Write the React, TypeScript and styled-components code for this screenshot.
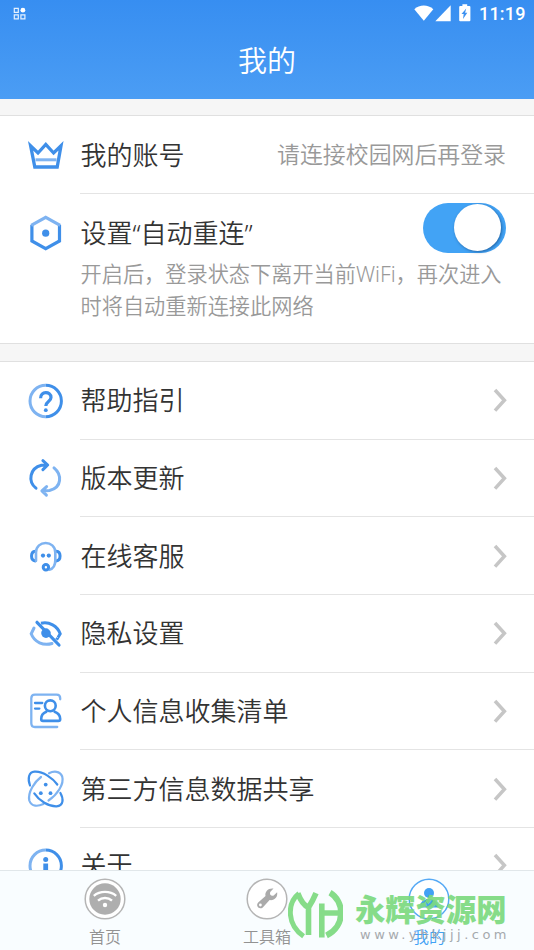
import React from 'react';
import styled, { createGlobalStyle } from 'styled-components';

const BLUE = '#3f8fe9';
const SOFT = '#7eb3f1';

const Global = createGlobalStyle`
  * { box-sizing: border-box; }
  html, body { margin: 0; padding: 0; overflow: hidden; }
  body { font-family: 'Noto Sans CJK SC', 'Noto Sans', sans-serif; font-weight: 350; }
  svg { display: block; flex: none; }
`;

const Screen = styled.div`
  position: relative;
  display: flex;
  flex-direction: column;
  width: 534px;
  height: 950px;
  overflow: hidden;
  background: #f6f6f6;
`;

const Header = styled.header`
  flex: none;
  height: 99px;
  background: linear-gradient(#378ef1, #4b9df4);
  color: #fff;
`;

const StatusBar = styled.div`
  display: flex;
  justify-content: space-between;
  align-items: center;
  height: 27px;
  padding: 0 9px 0 13px;
`;

const StatusGroup = styled.div`
  display: flex;
  align-items: center;
`;

const Clock = styled.span`
  font: 500 18px/27px Roboto, sans-serif;
  margin-left: 8px;
  letter-spacing: 0.2px;
  width: 46px;
  white-space: nowrap;
`;

const Title = styled.h1`
  margin: 0;
  font-size: 29px;
  line-height: 64px;
  font-weight: 350;
  text-align: center;
`;

const Content = styled.main`
  flex: 1;
  min-height: 0;
  overflow: hidden;
  padding-top: 16px;
`;

const Section = styled.section<{ $gap?: number }>`
  background: #fff;
  border-top: 1px solid #e0e0e0;
  border-bottom: 1px solid #e0e0e0;
  margin-bottom: ${(p) => p.$gap ?? 0}px;
`;

const Row = styled.div<{ $height: number }>`
  display: flex;
  height: ${(p) => p.$height}px;
  padding-left: 24px;
`;

const IconSlot = styled.div`
  display: flex;
  align-items: center;
  width: 56px;
  height: 77px;
`;

const RowBody = styled.div<{ $last?: boolean }>`
  flex: 1;
  display: flex;
  justify-content: space-between;
  align-items: center;
  padding: 0 27px ${(p) => (p.$last ? 3 : 0)}px 0.5px;
  border-bottom: ${(p) => (p.$last ? 'none' : '1.6px solid #e4e4e4')};
`;

const Label = styled.span`
  font-family: 'Noto Sans', 'Noto Sans CJK SC', sans-serif;
  font-size: 26px;
  line-height: 38px;
  color: #333;
  white-space: nowrap;
`;

const Note = styled.span`
  font-size: 22.9px;
  line-height: 34px;
  padding-bottom: 4px;
  margin-right: 1px;
  color: #999;
  white-space: nowrap;
`;

const SettingBody = styled.div`
  flex: 1;
  padding: 8px 28px 0 0.5px;
`;

const SettingTop = styled.div`
  display: flex;
  justify-content: space-between;
  height: 56px;
`;

const SettingLabel = styled(Label)`
  margin-top: 12px;
`;

const Toggle = styled.div`
  width: 83.5px;
  height: 50px;
  margin-top: 1px;
  border-radius: 25px;
  padding: 1.2px 5px;
  background: #42a3f5;
  display: flex;
  justify-content: flex-end;
`;

const Knob = styled.div`
  width: 47px;
  height: 47px;
  border-radius: 50%;
  background: #fff;
  box-shadow: 1px 1px 3px rgba(0, 40, 90, 0.5);
`;

const Description = styled.p`
  margin: 0;
  font-family: 'Noto Sans', 'Noto Sans CJK SC', sans-serif;
  font-size: 21.2px;
  line-height: 32px;
  color: #999;
  white-space: nowrap;
`;

const NavBar = styled.nav`
  flex: none;
  display: flex;
  height: 80px;
  padding: 0 24px;
  border-top: 1px solid #e1e7ea;
  background: #f9fdff;
`;

const NavItem = styled.div<{ $active?: boolean }>`
  flex: 1;
  display: flex;
  flex-direction: column;
  align-items: center;
  padding-top: 7px;
  font-size: 16px;
  line-height: 22px;
  color: ${(p) => (p.$active ? '#42a1f4' : '#929292')};
`;

const NavLabel = styled.span`
  margin-top: 5px;
`;

const Watermark = styled.div`
  position: absolute;
  left: 288px;
  top: 889px;
  display: flex;
  gap: 12px;
  opacity: 0.92;
`;

const MarkText = styled.div`
  display: flex;
  flex-direction: column;
`;

const MarkName = styled.span`
  font-size: 30.3px;
  line-height: 38px;
  font-weight: 900;
  color: #7dda80;
  white-space: nowrap;
`;

const MarkUrl = styled.span`
  font: 13px/16px 'DejaVu Sans', sans-serif;
  letter-spacing: 3.5px;
  color: #9fa3a7;
  margin: 0 0 0 5px;
  white-space: nowrap;
`;

function Glyph({ children }: { children: React.ReactNode }) {
  return (
    <svg width="44" height="44" viewBox="0 0 44 44" fill="none" stroke={BLUE} strokeWidth="3">
      {children}
    </svg>
  );
}

const CrownIcon = () => (
  <Glyph>
    <path d="M11.5 26.8h21" stroke={SOFT} />
    <path d="M6.6 12.8 10.8 34H33.2L37 12.8 29.6 20 21.8 11.5 14 20Z" strokeWidth="3.3" />
  </Glyph>
);

const HexagonIcon = () => (
  <Glyph>
    <path d="M7.9 14v16l13.8 7.7 13.8-7.7V14" strokeWidth="3.2" />
    <path d="m7.2 14.4 14.5-8 14.5 8" stroke={SOFT} strokeWidth="3.2" />
    <circle cx="21.7" cy="22.2" r="3.6" fill={BLUE} stroke="none" />
  </Glyph>
);

const HelpIcon = () => (
  <Glyph>
    <path d="M21.7 37.7a15.7 15.7 0 0 1 0-31.4" stroke={SOFT} />
    <path d="M21.7 6.3a15.7 15.7 0 0 1 0 31.4" />
    <path d="M16.6 19.2c-.3-7.2 10.4-7.2 10.4-.8 0 4.3-5.2 3.9-5.2 8.6" strokeWidth="3.2" />
    <circle cx="21.8" cy="31.2" r="1.9" fill={BLUE} stroke="none" />
  </Glyph>
);

const RefreshIcon = () => (
  <Glyph>
    <g strokeLinecap="round" strokeLinejoin="round">
      <path d="M30 11.9C38 18.5 38.3 31.5 25.5 34.5L18.5 34.9M22.6 30.6 17.9 34.9l4.5 4.3" stroke={SOFT} />
      <path d="M12 32.2C3.7 25.6 5.5 12.2 17.5 9.3L23.5 9M18.9 4.7 23.7 9l-4.8 4.6" />
    </g>
  </Glyph>
);

const HeadsetIcon = () => (
  <Glyph>
    <g strokeLinecap="round">
      <path d="M11.3 17.2c-5 .4-5 9.3 0 9.7M32.3 17.2c5 .4 5 9.3 0 9.7" />
      <path d="M12 26.8V18.5c0-12.7 19.3-12.7 19.3 0v8c0 5.5-2.6 8.3-6 9.2" stroke={SOFT} strokeWidth="2.6" />
    </g>
    <circle cx="21.9" cy="33.2" r="2.7" fill="#fff" />
    <g fill={BLUE} stroke="none">
      <circle cx="19" cy="21.6" r="2.1" />
      <circle cx="24.8" cy="21.6" r="2.1" />
    </g>
  </Glyph>
);

const EyeOffIcon = () => (
  <Glyph>
    <path d="M10 16 7.2 21.8c3.2 8.5 12.1 12.2 20.8 9.7" stroke={SOFT} strokeLinecap="round" />
    <path d="M17 11.3c8-2 16.5 2.6 19.2 10.5l-3.6 6" />
    <circle cx="22" cy="21.1" r="4.8" fill={BLUE} stroke="none" />
    <path d="M21 13.2 33.5 25.8" stroke="#fff" strokeWidth="1" />
    <path d="M13 10.3 35 33" strokeWidth="3.2" strokeLinecap="round" />
  </Glyph>
);

const CardIcon = () => (
  <Glyph>
    <g strokeWidth="2.3" strokeLinecap="round">
      <path
        d="M36.2 10.3V9.2q0-3.6-3.6-3.6H10.9Q7.3 5.6 7.3 9.2v25.1q0 3.7 3.6 3.7h22.3"
        stroke={SOFT}
      />
      <path d="M11 14h7.3M11 19.6h4.4" />
      <circle cx="26.3" cy="16.8" r="5.4" strokeWidth="2.6" />
      <path
        d="M22.3 22.7c-3 1.2-5.1 4.2-5.1 7.2 0 1.3.6 2 1.8 2h15.4c1.2 0 1.8-.7 1.8-2 0-3-2.4-6-5.6-7.2"
        strokeWidth="2.6"
      />
    </g>
  </Glyph>
);

const AtomIcon = () => (
  <Glyph>
    <g strokeWidth="2.2" strokeLinecap="round">
      <path
        d="M17 10C11 14.5 3.5 25 5.3 33.5C7.5 40 14 39.5 19.5 37M24.5 33.5C33 28 40.5 17 38.2 9.5C36 3.7 29.5 3.9 25 6.3"
        stroke={SOFT}
      />
      <path d="M6 18.5C3.5 11.5 4.5 5.3 10.5 4.7C19 4 29 11.5 33.3 17.5M10.3 26.3C15.5 34 24.5 39.6 32.5 39.4C40 38.8 39.5 31.5 36.4 26" />
    </g>
    <g fill={BLUE} stroke="none">
      <circle cx="21.7" cy="17.6" r="1.9" />
      <circle cx="16.8" cy="26.2" r="1.9" />
      <circle cx="26.5" cy="26.2" r="1.9" />
    </g>
  </Glyph>
);

const InfoIcon = () => (
  <Glyph>
    <path d="M21.7 36.4a15.7 15.7 0 0 1 0-31.4" stroke={SOFT} />
    <path d="M21.7 5a15.7 15.7 0 0 1 0 31.4" />
    <circle cx="21.7" cy="14.5" r="2.5" fill={BLUE} stroke="none" />
    <path d="M21.7 18.5v11" strokeWidth="4.8" />
  </Glyph>
);

const Chevron = () => (
  <svg width="14" height="26" viewBox="0 0 14 26" fill="none" stroke="#c6c6c6" strokeWidth="3.5">
    <path d="M2 3 11.4 13.3 2 23.6" />
  </svg>
);

const AppsIcon = () => (
  <svg width="13" height="13" viewBox="0 0 13 13" fill="none" stroke="#e5f1ff" strokeWidth="1.2">
    <path d="M1.3 1.3h4v4h-4zM1.3 7.9h4v4h-4zM7.9 7.9h4v4h-4z" />
    <circle cx="9.9" cy="3.2" r="2.4" fill="#fff" stroke="none" />
  </svg>
);

const SignalIcons = () => (
  <svg width="57" height="20" viewBox="0 0 57 20" fill="#fff">
    <path d="M.3 5.2C5.5.2 14 .2 19.3 5.2L9.8 16.8Z" />
    <path d="M36.7 1.2v16H21.3Z" />
    <path d="M46.2 2h2.2V.3h4.8V2h2.2q1 0 1 1v13.2q0 1-1 1h-9.2q-1 0-1-1V3q0-1 1-1Z" />
    <path d="m52.2 4.4-4.7 5.7h2.2l-.7 5 4.3-6.3h-2.2Z" fill="#3c91f1" />
  </svg>
);

const HomeIcon = () => (
  <svg width="42" height="42" viewBox="0 0 42 42" fill="none">
    <circle cx="21" cy="21" r="19.8" stroke="#b5b5b5" strokeWidth="1.5" fill="#fff" />
    <circle cx="21" cy="21" r="15.7" fill="#aeaeae" />
    <g stroke="#fff" strokeWidth="2.4">
      <path d="M9.8 17.8c6.2-5.2 16.2-5.2 22.4 0M14 22.6c4-3.5 10-3.5 14 0" />
    </g>
    <circle cx="21" cy="27" r="2.2" fill="#fff" />
  </svg>
);

const ToolIcon = () => (
  <svg width="42" height="42" viewBox="0 0 42 42" fill="none">
    <circle cx="21" cy="21" r="19.8" stroke="#b5b5b5" strokeWidth="1.5" fill="#fff" />
    <path
      d="M27.5 10.5c-5-.8-9 3-8 7.6l-7.3 6.5c-3 3.3 1 7.6 4.6 4.8l6.8-7.3c4.7.8 8.5-3 7.5-7.8l-3.4 3.3c-2.5.9-4.4-1-3.5-3.5Z"
      fill="#aaa"
    />
    <circle cx="14.4" cy="27" r="1.4" fill="#fff" />
  </svg>
);

const PersonIcon = () => (
  <svg width="42" height="42" viewBox="0 0 42 42" fill="none">
    <circle cx="21" cy="21" r="19.8" stroke="#55a9f5" strokeWidth="1.5" fill="#fff" />
    <circle cx="21" cy="15" r="5" fill="#42a1f4" />
    <path d="M11.5 29.5c.5-6 4.5-8.5 9.5-8.5s9 2.5 9.5 8.5Z" fill="#42a1f4" />
  </svg>
);

const MarkLogo = () => (
  <svg width="55" height="50" viewBox="0 0 55 50" fill="none" stroke="#7dda80" strokeWidth="5.6">
    <path d="M11 4.5C-1 14-1.5 35.6 15.6 47.2" strokeWidth="5" />
    <path d="M9.8 4.2C12 10 15 16 20.5 18.5Q24.5 12.5 28 4.2M20.5 16.5V46" />
    <path d="M33.8 14.4V48.5M34 24H50" />
    <path d="M42 3.6C56.5 12 58 37 38.5 46.5" strokeWidth="6" />
  </svg>
);

const menu = [
  { label: '帮助指引', Icon: HelpIcon },
  { label: '版本更新', Icon: RefreshIcon },
  { label: '在线客服', Icon: HeadsetIcon },
  { label: '隐私设置', Icon: EyeOffIcon },
  { label: '个人信息收集清单', Icon: CardIcon },
  { label: '第三方信息数据共享', Icon: AtomIcon },
  { label: '关于', Icon: InfoIcon },
];

export default function App() {
  return (
    <>
      <Global />
      <Screen>
        <Header>
          <StatusBar>
            <AppsIcon />
            <StatusGroup>
              <SignalIcons />
              <Clock>11:19</Clock>
            </StatusGroup>
          </StatusBar>
          <Title>我的</Title>
        </Header>
        <Content>
          <Section $gap={17}>
            <Row $height={78}>
              <IconSlot><CrownIcon /></IconSlot>
              <RowBody>
                <Label>我的账号</Label>
                <Note>请连接校园网后再登录</Note>
              </RowBody>
            </Row>
            <Row $height={149}>
              <IconSlot><HexagonIcon /></IconSlot>
              <SettingBody>
                <SettingTop>
                  <SettingLabel>设置“自动重连”</SettingLabel>
                  <Toggle><Knob /></Toggle>
                </SettingTop>
                <Description>
                  开启后，登录状态下离开当前WiFi，再次进入
                  <br />
                  时将自动重新连接此网络
                </Description>
              </SettingBody>
            </Row>
          </Section>
          <Section>
            {menu.map(({ label, Icon }, i) => (
              <Row key={label} $height={77.7}>
                <IconSlot><Icon /></IconSlot>
                <RowBody $last={i === menu.length - 1}>
                  <Label>{label}</Label>
                  <Chevron />
                </RowBody>
              </Row>
            ))}
          </Section>
        </Content>
        <NavBar>
          <NavItem><HomeIcon /><NavLabel>首页</NavLabel></NavItem>
          <NavItem><ToolIcon /><NavLabel>工具箱</NavLabel></NavItem>
          <NavItem $active><PersonIcon /><NavLabel>我的</NavLabel></NavItem>
        </NavBar>
        <Watermark>
          <MarkLogo />
          <MarkText>
            <MarkName>永辉资源网</MarkName>
            <MarkUrl>www.yhkjjj.com</MarkUrl>
          </MarkText>
        </Watermark>
      </Screen>
    </>
  );
}
